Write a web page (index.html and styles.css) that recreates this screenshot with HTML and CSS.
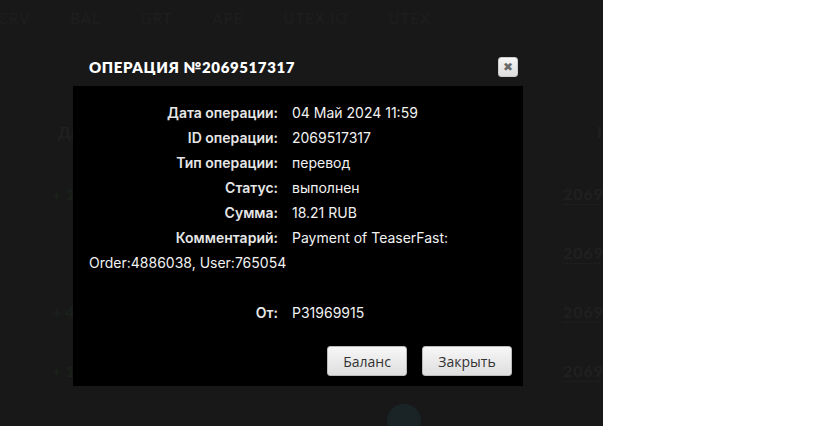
FILE: index.html
```html
<!DOCTYPE html>
<html lang="ru">
<head>
    <meta charset="UTF-8">
    <meta name="viewport" content="width=device-width, initial-scale=1.0">
    <title>Операция №2069517317</title>
    <link rel="stylesheet" href="styles.css">
</head>
<body>
    <div class="page">
        <!-- coin tabs behind the overlay -->
        <nav class="tabs">
            <span class="tab">CRV</span>
            <span class="tab">BAL</span>
            <span class="tab">GRT</span>
            <span class="tab">APE</span>
            <span class="tab">UTEX.IO</span>
            <span class="tab">UTEX</span>
        </nav>

        <div class="history">
            <div class="history-head">
                <span class="col-sum">Дата</span>
                <span class="col-id">ID</span>
            </div>
            <div class="history-row">
                <span class="col-sum plus">+ 18.21</span>
                <span class="col-id link">2069517317</span>
            </div>
            <div class="history-row">
                <span class="col-sum plus"></span>
                <span class="col-id link">2069168420</span>
            </div>
            <div class="history-row">
                <span class="col-sum plus">+ 4.50</span>
                <span class="col-id link">2069132507</span>
            </div>
            <div class="history-row">
                <span class="col-sum plus">+ 12.00</span>
                <span class="col-id link">2069104466</span>
            </div>
        </div>
        <div class="more-btn"></div>

        <!-- operation details dialog -->
        <div class="modal">
            <div class="modal-header">
                <h2 class="modal-title">ОПЕРАЦИЯ №2069517317</h2>
                <button class="modal-close" type="button">&#10006;</button>
            </div>
            <div class="modal-body">
                <div class="info-row"><span class="info-label">Дата операции:</span>04 Май 2024 11:59</div>
                <div class="info-row"><span class="info-label">ID операции:</span>2069517317</div>
                <div class="info-row"><span class="info-label">Тип операции:</span>перевод</div>
                <div class="info-row"><span class="info-label">Статус:</span>выполнен</div>
                <div class="info-row"><span class="info-label">Сумма:</span>18.21 RUB</div>
                <div class="info-row"><span class="info-label">Комментарий:</span>Payment of TeaserFast: Order:4886038, User:765054</div>
                <br>
                <div class="info-row"><span class="info-label">От:</span>P31969915</div>
            </div>
            <div class="modal-footer">
                <button class="btn" type="button">Баланс</button>
                <button class="btn btn-wide" type="button">Закрыть</button>
            </div>
        </div>
    </div>
</body>
</html>
```

FILE: styles.css
```css
body {
    margin: 0;
    background-color: #fff;
    font-family: Inter, "Open Sans", sans-serif;
}
.page {
    position: relative;
    width: 603px;
    height: 426px;
    overflow: hidden;
    background-color: #181818;
}
.tabs {
    display: flex;
    gap: 40px;
    margin-left: -2px;
    padding-top: 9px;
    font-family: Lato, sans-serif;
    font-size: 15px;
    letter-spacing: 1px;
    color: #1e1e1e;
}
.history {
    padding: 95px 0 0 48px;
}
.history-head,
.history-row {
    display: flex;
    font-family: Lato, sans-serif;
    font-weight: bold;
    font-size: 16px;
}
.history-head {
    height: 62px;
    color: #202020;
}
.history-row {
    height: 59px;
}
.col-sum {
    flex: 0 0 515px;
    box-sizing: border-box;
    padding-left: 4px;
}
.col-id {
    flex-shrink: 0;
}
.history-head .col-sum {
    padding-left: 10px;
}
.history-head .col-id {
    padding-left: 34px;
}
.plus {
    color: #1b211b;
}
.link {
    height: 20px;
    border-bottom: 1px dotted #222;
    color: #202020;
    letter-spacing: 1px;
}
.more-btn {
    position: absolute;
    left: 387px;
    top: 404px;
    width: 34px;
    height: 34px;
    border-radius: 50%;
    background-color: #1a2427;
}
.modal {
    position: absolute;
    left: 73px;
    top: 48px;
    width: 450px;
}
.modal-header {
    display: flex;
    align-items: center;
    justify-content: space-between;
    height: 38px;
    padding: 0 5px 0 16px;
}
.modal-title {
    margin: 0;
    font-family: Lato, sans-serif;
    font-size: 15px;
    font-weight: 800;
    letter-spacing: 0.6px;
    color: #fff;
}
.modal-close {
    width: 20px;
    height: 20px;
    padding: 0;
    border: 1px solid #ccc;
    border-radius: 3px;
    background: linear-gradient(#f6f6f6, #dcdcdc);
    color: #6a6a6a;
    font-size: 12px;
    line-height: 18px;
}
.modal-body {
    padding: 14px 16px 0;
    background-color: #000;
    color: #f2f2f2;
    font-size: 14px;
    line-height: 25px;
}
.info-label {
    display: inline-block;
    width: 189px;
    margin-right: 14px;
    text-align: right;
    font-weight: 600;
    color: #e6e6e6;
}
.modal-footer {
    display: flex;
    justify-content: flex-end;
    gap: 15px;
    padding: 21px 11px 10px 0;
    background-color: #000;
}
.btn {
    width: 80px;
    height: 30px;
    padding: 0;
    border: 1px solid #bbb;
    border-radius: 3px;
    background: linear-gradient(#f7f7f7, #dedede);
    color: #333;
    font-family: "Open Sans", sans-serif;
    font-size: 14px;
}
.btn-wide {
    width: 90px;
}
```
